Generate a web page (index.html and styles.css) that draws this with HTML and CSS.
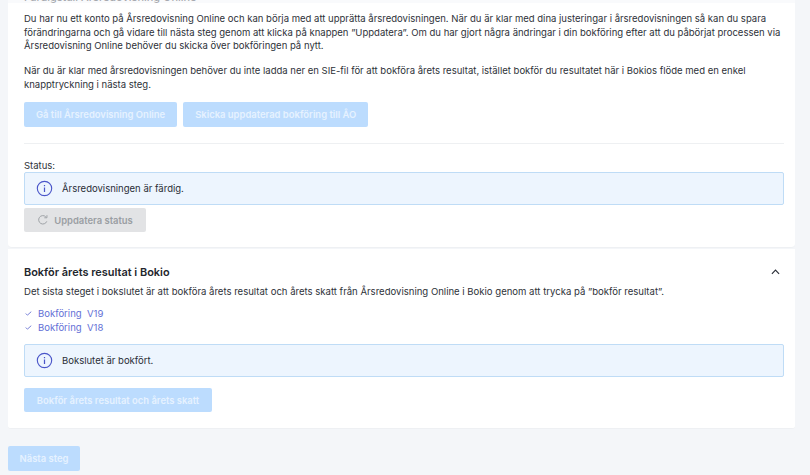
FILE: index.html
```html
<!DOCTYPE html>
<html lang="sv">
<head>
<meta charset="utf-8">
<title>Bokslut</title>
<link rel="stylesheet" href="styles.css">
</head>
<body>
<div class="topfade"></div>
<main class="page">
  <section class="card card-first">
    <h2 class="step-title title-clipped">Färdigställ Årsredovisning Online</h2>
    <p class="text">Du har nu ett konto på Årsredovisning Online och kan börja med att upprätta årsredovisningen. När du är klar med dina justeringar i årsredovisningen så kan du spara förändringarna och gå vidare till nästa steg genom att klicka på knappen ”Uppdatera”. Om du har gjort några ändringar i din bokföring efter att du påbörjat processen via Årsredovisning Online behöver du skicka över bokföringen på nytt.</p>
    <p class="text text-second">När du är klar med årsredovisningen behöver du inte ladda ner en SIE-fil för att bokföra årets resultat, istället bokför du resultatet här i Bokios flöde med en enkel knapptryckning i nästa steg.</p>
    <div class="btn-row">
      <button class="btn btn-primary btn-wide">Gå till Årsredovisning Online</button>
      <button class="btn btn-primary btn-wide">Skicka uppdaterad bokföring till ÅO</button>
    </div>
    <hr class="divider">
    <div class="status-label">Status:</div>
    <div class="notice">
      <svg class="info" viewBox="0 0 18 18" width="17" height="17"><circle cx="9" cy="9" r="7.6" fill="none" stroke="#4a55c9" stroke-width="1.2"/><path d="M9 5.2v1.3M9 8v4.6" stroke="#4a55c9" stroke-width="1.3" fill="none"/></svg>
      <span>Årsredovisningen är färdig.</span>
    </div>
    <button class="btn btn-grey">
      <svg viewBox="0 0 14 14" width="12" height="12"><path d="M11.4 8.6A4.9 4.9 0 1 1 10.2 3.2" fill="none" stroke="#9a9ea3" stroke-width="1.1"/><path d="M11.6 1.4v3h-3" fill="none" stroke="#9a9ea3" stroke-width="1.1"/></svg>
      Uppdatera status
    </button>
  </section>
  <section class="card card-second">
    <div class="head-row">
      <h2 class="step-title">Bokför årets resultat i Bokio</h2>
      <svg class="chev" viewBox="0 0 10 6" width="9" height="6"><path d="M1 5l4-4 4 4" fill="none" stroke="#2b2f38" stroke-width="1.3"/></svg>
    </div>
    <p class="text text-desc">Det sista steget i bokslutet är att bokföra årets resultat och årets skatt från Årsredovisning Online i Bokio genom att trycka på ”bokför resultat”.</p>
    <ul class="links">
      <li><svg viewBox="0 0 8 6" width="7" height="5"><path d="M.7 3l2 2L7.3.8" fill="none" stroke="#5d68cf" stroke-width="1"/></svg><a>Bokföring&nbsp; V19</a></li>
      <li><svg viewBox="0 0 8 6" width="7" height="5"><path d="M.7 3l2 2L7.3.8" fill="none" stroke="#5d68cf" stroke-width="1"/></svg><a>Bokföring&nbsp; V18</a></li>
    </ul>
    <div class="notice">
      <svg class="info" viewBox="0 0 18 18" width="17" height="17"><circle cx="9" cy="9" r="7.6" fill="none" stroke="#4a55c9" stroke-width="1.2"/><path d="M9 5.2v1.3M9 8v4.6" stroke="#4a55c9" stroke-width="1.3" fill="none"/></svg>
      <span>Bokslutet är bokfört.</span>
    </div>
    <button class="btn btn-primary btn-book">Bokför årets resultat och årets skatt</button>
  </section>
  <button class="btn btn-primary btn-next">Nästa steg</button>
</main>
</body>
</html>
```
FILE: styles.css
```css
* { box-sizing: border-box; }
html, body { margin: 0; height: 475px; overflow: hidden; background: #f4f6f9; }
body { font-family: Inter, "Liberation Sans", sans-serif; color: #2e3239; font-size: 9.52px; line-height: 13.5px; position: relative; }
.topfade { position: absolute; left: 0; right: 0; top: 0; height: 3px; background: rgba(244, 246, 249, .55); z-index: 2; }
.page { margin-top: -10px; padding: 0 15px 0 8px; display: flex; flex-direction: column; align-items: flex-start; }
.card { width: 787px; background: #fff; padding: 0 11px 0 16px; border-bottom: 1px solid #eef0f3; }
.card-first { height: 258px; border-radius: 4px; }
.card-second { height: 180px; margin-top: 1px; padding-top: 16px; border-radius: 0 0 3px 3px; }
.step-title { margin: 0; font-size: 10.95px; line-height: 14px; font-weight: 600; color: #23262d; }
.title-clipped { color: #4a4d54; font-weight: 500; }
.text { margin: 8px 0 0; }
.card-first .text-second { margin-top: 11.5px; }
.btn { display: inline-flex; align-items: center; justify-content: center; border: 0; border-radius: 2px; font: 600 9.45px/13px Inter, "Liberation Sans", sans-serif; padding: 0; }
.btn-primary { background: #bcdcfe; color: #e6f2ff; }
.btn-row { display: flex; gap: 6px; margin-top: 11px; }
.btn-wide { height: 25px; padding: 0 12px; }
.divider { margin: 16px 0 0; border: 0; border-top: 1px solid #eef0f2; width: 100%; }
.status-label { margin-top: 15px; line-height: 13px; }
.notice { display: flex; align-items: center; gap: 9px; height: 33px; padding-left: 11px; background: #edf5fe; border: 1px solid #bfdcf6; border-radius: 2px; color: #2a2e37; }
.btn-grey { margin-top: 3px; width: 122px; height: 24px; gap: 5px; background: #e2e3e5; color: #9a9ea3; }
.head-row { display: flex; justify-content: space-between; align-items: center; padding-right: 4px; }
.card-second .text-desc { margin-top: 6px; font-size: 9.56px; }
.links { list-style: none; margin: 8px 0 0; padding: 0; color: #6470d6; }
.links li { display: flex; align-items: center; gap: 6px; height: 14px; padding-left: 1px; }
.card-second .notice { margin-top: 9.5px; }
.btn-book { margin-top: 11px; height: 24px; width: 188px; }
.btn-next { margin-top: 17px; width: 72px; height: 25px; }
```
